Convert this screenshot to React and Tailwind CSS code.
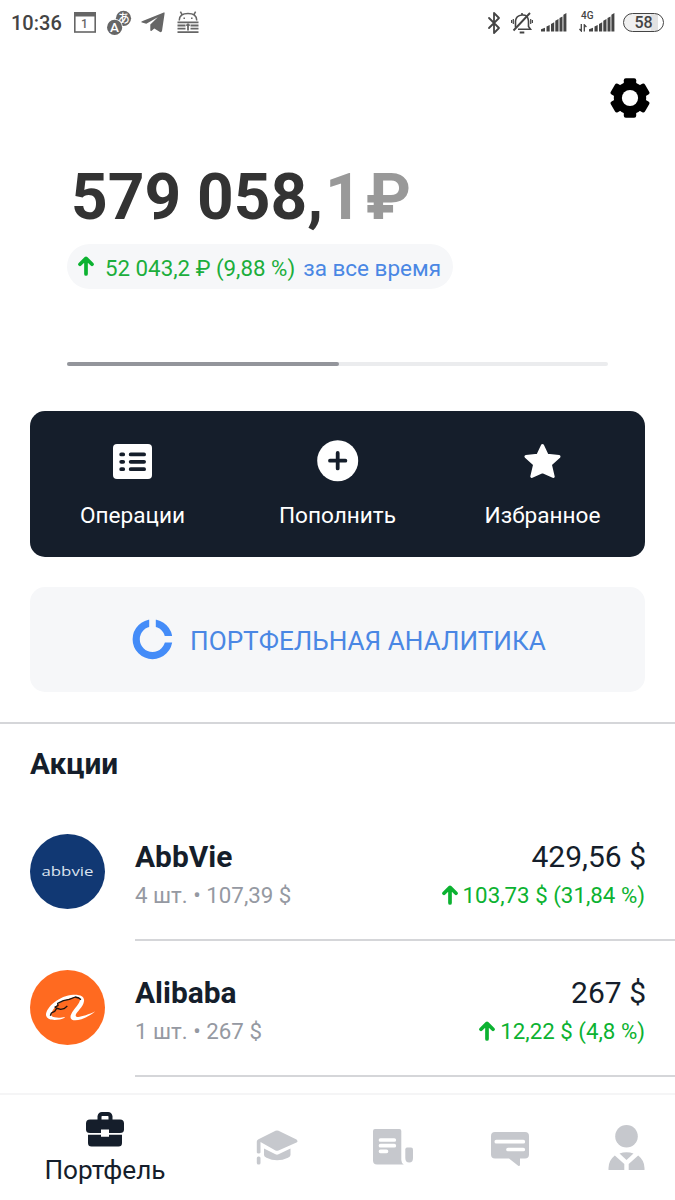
import { Bluetooth } from "lucide-react";

const stocks = [
  {
    name: "AbbVie",
    amount: "4 шт. • 107,39 $",
    total: "429,56 $",
    profit: "103,73 $ (31,84 %)",
    Logo: AbbvieLogo,
  },
  {
    name: "Alibaba",
    amount: "1 шт. • 267 $",
    total: "267 $",
    profit: "12,22 $ (4,8 %)",
    Logo: AlibabaLogo,
  },
];

const actions = [
  { label: "Операции", Icon: ListIcon },
  { label: "Пополнить", Icon: PlusIcon },
  { label: "Избранное", Icon: StarIcon },
];

function AbbvieLogo() {
  return (
    <svg width="75" height="75" viewBox="0 0 75 75">
      <circle cx="37.5" cy="37.5" r="37.5" fill="#113873" />
      <text
        x="11.5"
        y="42"
        fontSize="12"
        fontFamily="'Open Sans', sans-serif"
        fontWeight="400"
        fill="#dbe3ef"
        textLength="52"
        lengthAdjust="spacingAndGlyphs"
      >
        abbvie
      </text>
    </svg>
  );
}

function AlibabaLogo() {
  return (
    <svg width="75" height="75" viewBox="0 0 225 225">
      <circle cx="112.5" cy="112.5" r="112.5" fill="#ff6a20" />
      <path
        fill="#fff"
        d="M104 143C86 152 52 154 48 136C47 112 88 76 130 74C158 73 167 84 160 101C153 117 137 128 137 137C139 146 170 137 196 124C174 144 138 156 126 149C115 142 126 126 140 109C150 96 154 85 146 81C124 79 86 95 73 114C60 132 60 139 74 142C84 144 96 143 104 141Z"
      />
      <path
        fill="none"
        stroke="#1c1410"
        strokeWidth="4"
        strokeLinejoin="round"
        d="M61 137L64 129L74 124L80 115L75 111L84 107L83 100L100 92L118 88L136 81L146 84L153 89M78 114L92 118L102 116L112 108"
      />
    </svg>
  );
}

function ListIcon() {
  return (
    <svg width="39" height="35" viewBox="0 0 39 35">
      <rect width="39" height="35" rx="4" fill="#fff" />
      <g stroke="#151e2b" strokeWidth="3.8" strokeLinecap="round">
        <path d="M8.2 10.4h2M8.2 17.8h2M8.2 25.2h2M17.7 10.4h13.4M17.7 17.8h13.4M17.7 25.2h13.4" />
      </g>
    </svg>
  );
}

function PlusIcon() {
  return (
    <svg width="42" height="42" viewBox="0 0 42 42">
      <circle cx="20.7" cy="20.7" r="20.5" fill="#fff" />
      <path
        d="M20.7 13v15.4M13 20.7h15.4"
        stroke="#151e2b"
        strokeWidth="3.8"
        strokeLinecap="round"
      />
    </svg>
  );
}

function StarIcon() {
  return (
    <svg width="37" height="36" viewBox="0 0 37 36">
      <path
        d="M18.5 2.5L23.2 12.3L35 13.6L26.4 21.5L29.2 33.5L18.5 28.7L7.8 33.5L10.6 21.5L2 13.6L13.8 12.3Z"
        fill="#fff"
        stroke="#fff"
        strokeWidth="3"
        strokeLinejoin="round"
      />
    </svg>
  );
}

function ArrowUp() {
  return (
    <svg width="16" height="20" viewBox="0 0 16 20" className="relative -top-px shrink-0">
      <path
        d="M8 17.9V3M2 8.3L8 2.4l6 5.9"
        fill="none"
        stroke="#0cb231"
        strokeWidth="3.7"
        strokeLinecap="round"
        strokeLinejoin="round"
      />
    </svg>
  );
}

function GearIcon() {
  return (
    <svg width="40" height="40" viewBox="0 0 40 40">
      <circle cx="20" cy="20" r="16.2" />
      <rect x="13.8" y="0.3" width="12.4" height="39.4" rx="2" />
      <rect x="13.8" y="0.3" width="12.4" height="39.4" rx="2" transform="rotate(60 20 20)" />
      <rect x="13.8" y="0.3" width="12.4" height="39.4" rx="2" transform="rotate(120 20 20)" />
      <circle cx="20" cy="20" r="8.1" fill="#fff" />
    </svg>
  );
}

function Signal() {
  return (
    <svg width="26" height="19" viewBox="0 0 26 19" fill="#444">
      <path d="M0 18.5v-2.2l4-1.6v3.8zM5.5 13.5l3.2-1.5v6.5H5.5zM10 11l3.2-1.7v9.2H10zM14.3 7.8L17.5 6v12.5h-3.2zM18.5 5l3-1.6v15.1h-3zM22.4 1.8L25.4 0v18.5h-3z" />
    </svg>
  );
}

function StatusBar() {
  return (
    <div className="flex h-[45px] items-center pl-[11px] pr-[11px] text-[#444]">
      <span className="w-[63px] text-[20px] font-medium leading-5">10:36</span>
      <svg width="22" height="21" viewBox="0 0 22 21" className="mr-[10px]">
        <rect x="0.8" y="0.8" width="20.4" height="19.2" fill="none" stroke="#666" strokeWidth="1.6" />
        <path d="M0 0h22v4.5H0z" fill="#666" />
        <text x="10.5" y="16" fontSize="12" fontWeight="500" textAnchor="middle" fill="#666">
          1
        </text>
      </svg>
      <svg width="26" height="26" viewBox="0 0 26 26" className="mr-[9px] overflow-visible">
        <circle cx="17.5" cy="8.3" r="7.6" fill="#666" />
        <text
          x="17.7"
          y="12.5"
          fontSize="12"
          fontWeight="500"
          fontFamily="'Noto Sans CJK JP', sans-serif"
          textAnchor="middle"
          fill="#fff"
        >
          あ
        </text>
        <circle cx="8.6" cy="17.4" r="8.3" fill="#fff" />
        <circle cx="8.6" cy="17.4" r="7.6" fill="#666" />
        <text x="8.6" y="22.2" fontSize="13.5" fontWeight="500" textAnchor="middle" fill="#fff">
          A
        </text>
      </svg>
      <svg width="24" height="21" viewBox="0 0 24 21" className="mr-[12px]" fill="#666">
        <path d="M22.8 0.4L1 9.2Q-.6 10 1 10.6L5.3 11.8L16.8 5.2L9.3 12.6V18.3Q9.6 19.6 10.7 18.8L13.3 16.5L19 20Q20.5 20.6 21 19L23.6 1.4Q23.6 .2 22.8 .4Z" />
      </svg>
      <svg width="22" height="23" viewBox="0 0 22 23" fill="none" stroke="#666" strokeWidth="1.5">
        <path d="M2.3 9.5V9Q2.5 2.5 11 2.5T19.7 9v.5M5.2 3.8L3.4 .6M16.8 3.8L18.6 .6" />
        <path d="M7.2 6.5v1.5M14.8 6.5v1.5" />
        <path d="M.5 11.3h21M.5 14.5h8M13.5 14.5h8M.5 17.7h8M13.5 17.7h8M.5 21.2h21" strokeWidth="1.8" />
        <path d="M11 12.5v7M9.2 14.2h3.6" strokeWidth="1.8" />
      </svg>
      <div className="ml-auto flex items-center">
        <Bluetooth size={24} strokeWidth={1.8} className="mr-[5px]" />
        <svg width="22" height="22" viewBox="0 0 22 22" className="mr-[8px]" fill="none" stroke="#444" strokeWidth="1.6">
          <path d="M4.5 15.5V9Q5 3.5 11 3t6.5 6v5.5l2 2.8H7M11 3V1" />
          <path d="M19 1L2.5 18.5M8.7 20.5h4.6" strokeWidth="1.9" />
          <path d="M2.3 7v5M.6 8v3M19.7 7v5M21.4 8v3" strokeWidth="1.2" />
        </svg>
        <Signal />
        <div className="relative ml-[22px] flex w-[26px]">
          <Signal />
          <span className="absolute -left-[8px] -top-[2px] text-[10px] font-medium leading-[9px]">
            4G
          </span>
          <svg width="8" height="8" viewBox="0 0 8 8" className="absolute -left-[10px] top-[11px]">
            <path d="M2.3 0v7L.4 5M5.3 7.5V.8L7.4 3" fill="none" stroke="#444" strokeWidth="1.3" />
          </svg>
        </div>
        <div className="ml-2 flex h-[19px] w-[41px] items-center justify-center rounded-full border-[1.5px] border-[#444] bg-[linear-gradient(90deg,#f0f0f0_70%,#e2e2e2_70%,#e2e2e2_86%,#fff_86%)] text-[16px] font-medium leading-none">
          58
        </div>
      </div>
    </div>
  );
}

function StockRow({ name, amount, total, profit, Logo }) {
  return (
    <div className="flex h-[136px] pl-[30px]">
      <div className="w-[105px] pt-[29px]">
        <Logo />
      </div>
      <div className="flex flex-1 justify-between border-b-2 border-[#d5d6d9] pr-[30px] pt-[32px]">
        <div>
          <div className="text-[29.9px] font-bold leading-[39px] text-[#151e2b]">{name}</div>
          <div className="text-[22.3px] leading-[39px] text-[#9599a2]">{amount}</div>
        </div>
        <div className="flex flex-col items-end">
          <div className="-mr-px text-[30px] leading-[39px] text-[#151e2b]">{total}</div>
          <div className="flex items-center gap-[5px] text-[22.3px] leading-[39px] text-[#0cb231]">
            <ArrowUp />
            {profit}
          </div>
        </div>
      </div>
    </div>
  );
}

function BottomNav() {
  return (
    <nav className="grid h-[107px] grid-cols-[218.5px_repeat(4,116.5px)] border-t-2 border-[#f5f5f6] bg-white text-[#c6c8cd]">
      <div className="flex w-[210px] flex-col items-center pt-[17px]">
        <svg width="38" height="35" viewBox="0 0 38 35">
          <path d="M13.5 8V4.5Q14 2 16 2h6Q24 2 24.5 4.5V8" fill="none" stroke="#151e2b" strokeWidth="4" />
          <path
            d="M4 7.5h30q4 0 4 4v6q0 3.5-4 3.5H23v-3.5h-8V21H4q-4 0-4-3.5v-6q0-4 4-4zM2 22.8h13v2h8v-2h13v8.2q0 3.5-3.5 3.5h-27Q2 34.5 2 31z"
            fill="#151e2b"
          />
        </svg>
        <span className="mt-[6px] text-[26.2px] leading-[34px] text-[#151e2b]">Портфель</span>
      </div>
      <div className="flex justify-center pt-[35px]">
        <svg width="42" height="36" viewBox="0 0 42 36" fill="currentColor">
          <path d="M19.5 .8Q21 0 22.5 .8L40.5 9.5Q42.5 11.5 40.5 12.5L22.5 20.5Q21 21.2 19.5 20.5L4.5 12V22.5Q4.5 23.5 2.7 23.5T.8 22.5V11.5Q.8 10 2.5 9.2z" />
          <path d="M8 18.5L19.5 24.3Q21 25 22.5 24.3L34.5 18.5V25Q34.5 26.5 32 27.7Q21 33 10.5 27.7Q8 26.5 8 25z" />
          <rect x="0.8" y="26.5" width="3.7" height="8" rx="1.5" />
        </svg>
      </div>
      <div className="flex justify-center pt-[34px]">
        <svg width="40" height="36" viewBox="0 0 40 36" fill="currentColor">
          <path d="M2 0h24.5q1.8 0 1.8 2v29q0 3 2.5 4.5H4Q0 35.5 0 31.5V2Q0 0 2 0z" />
          <path d="M34 18.5h4q2 0 2 2V29q0 4.500-3.800 4.500T32.300 29v-8.500q0-2 1.700-2z" />
          <path d="M7.5 11h13.8M7.5 16.7h13.8M7.5 22.3h6" stroke="#fff" strokeWidth="3.7" strokeLinecap="round" />
        </svg>
      </div>
      <div className="flex justify-center pt-[37px]">
        <svg width="38" height="35" viewBox="0 0 38 35" fill="currentColor">
          <path d="M4 0h30q4 0 4 4v18.5q0 4-4 4h-5V33q-.3 1.5-1.8 .8L18 26.5H4q-4 0-4-4V4Q0 0 4 0z" />
          <path d="M5.3 9.7h27M17 17.5h15.3" stroke="#fff" strokeWidth="3.7" strokeLinecap="round" />
        </svg>
      </div>
      <div className="flex justify-center pt-[30px]">
        <svg width="37" height="46" viewBox="0 0 37 46" fill="currentColor">
          <circle cx="18.5" cy="11.3" r="11.3" />
          <path d="M11.5 28.5Q18.5 26 25.5 28.5L18.5 35z" />
          <path d="M6.8 30.5L16.3 39V45H.5V43Q.5 35.5 6.800 30.500zM30.200 30.500L20.700 39V45H36.500V43Q36.500 35.500 30.200 30.500z" />
        </svg>
      </div>
    </nav>
  );
}

function App() {
  return (
    <div className="flex h-[1200px] w-[675px] flex-col overflow-hidden bg-white font-[Roboto,sans-serif]">
      <StatusBar />

      <header className="flex h-[120px] justify-end pr-[25px] pt-[33px]">
        <GearIcon />
      </header>

      <section className="h-[246px] px-[67px]">
        <h1 className="flex h-16 whitespace-pre pl-1 pt-px text-[64px] font-bold leading-[64px] text-[#333]">
          579 058,
          <span className="ml-0.5 text-[#999]">1</span>
          <span className="ml-1 text-[#999]">₽</span>
        </h1>
        <div className="mt-[15px] flex h-[45px] w-[386px] items-center rounded-full bg-[#f6f7f9] pl-[11px] text-[22.3px] leading-[30px]">
          <ArrowUp />
          <span className="ml-[11px] pt-[3px] text-[#1cae3c]">52 043,2 ₽ (9,88 %)</span>
          <span className="ml-2 pt-[3px] text-[22.5px] text-[#4a87e4]">за все время</span>
        </div>
        <div className="mt-[73px] flex h-1 overflow-hidden rounded-sm bg-[#ebecee]">
          <div className="w-[272px] rounded-r-sm bg-[#93959b]" />
        </div>
      </section>

      <section className="mx-[30px] grid h-[146px] grid-cols-3 rounded-[15px] bg-[#151e2b] text-white">
        {actions.map(({ label, Icon }) => (
          <div key={label} className="flex flex-col items-center pt-[25px]">
            <div className="flex h-[50px] items-center">
              <Icon />
            </div>
            <span className="mt-[15px] text-[22.6px] leading-[30px]">{label}</span>
          </div>
        ))}
      </section>

      <section className="mx-[30px] mt-[30px] flex h-[105px] items-center rounded-[15px] bg-[#f6f7f9] pl-[102px]">
        <svg width="41" height="41" viewBox="0 0 41 41" fill="none">
          <circle cx="20.5" cy="20.3" r="16.3" stroke="#448cf8" strokeWidth="7.2" />
          <path d="M20.5 20.3V0M20.5 20.3H41" stroke="#f6f7f9" strokeWidth="6.6" />
        </svg>
        <span className="ml-[17px] pt-[5px] text-[26.15px] text-[#4a87e4]">ПОРТФЕЛЬНАЯ АНАЛИТИКА</span>
      </section>

      <main className="mt-[30px] h-[371px] overflow-hidden border-t-2 border-[#d5d6d9]">
        <h2 className="h-[81px] pl-[30px] pt-[23px] text-[29.8px] font-bold leading-[34px] text-[#151e2b]">
          Акции
        </h2>
        {stocks.map((stock) => (
          <StockRow key={stock.name} {...stock} />
        ))}
      </main>

      <BottomNav />
    </div>
  );
}

export default App;
